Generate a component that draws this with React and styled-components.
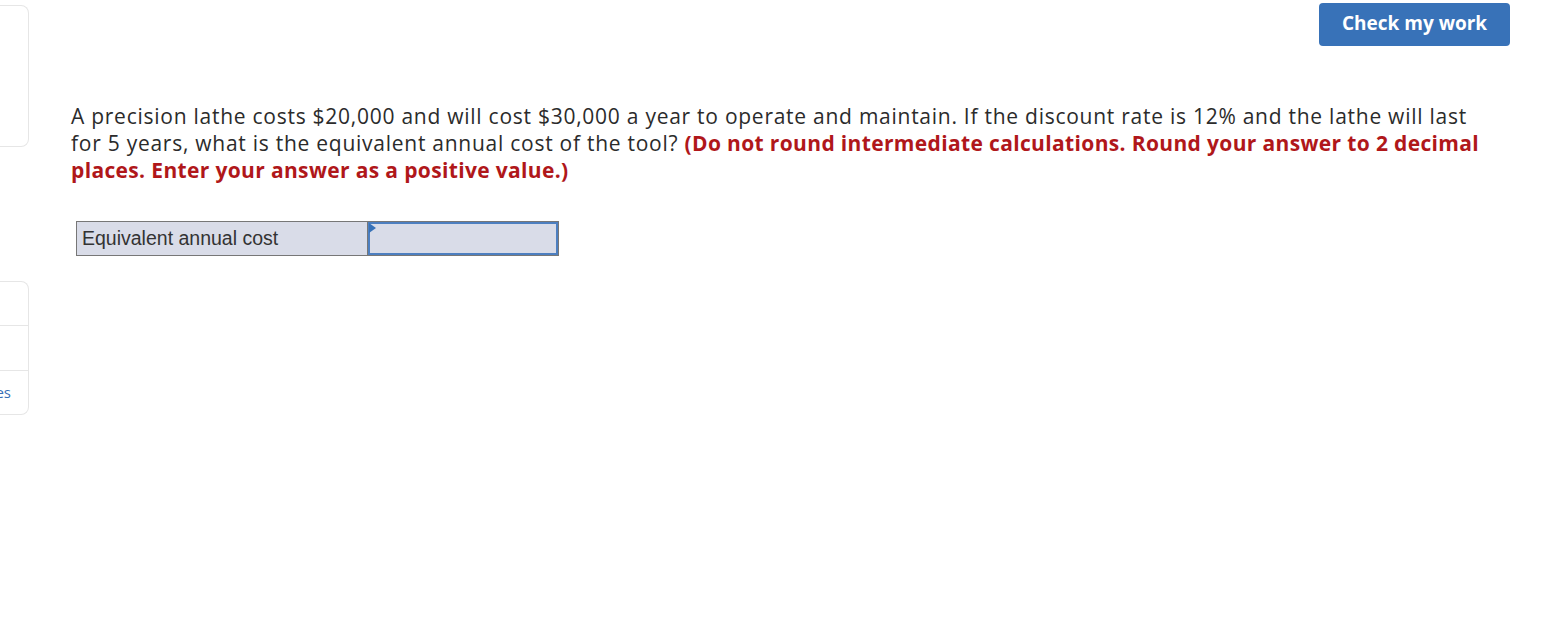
import React from "react";
import styled, { createGlobalStyle } from "styled-components";

const GlobalStyle = createGlobalStyle`
    body {
        margin: 0;
        background: #fff;
        font-family: "Open Sans", "Lato", sans-serif;
    }
`;

const Page = styled.div`
    display: flex;
    flex-direction: row;
    min-height: 633px;
`;

const Sidebar = styled.div`
    width: 29px;
    flex-shrink: 0;
    display: flex;
    flex-direction: column;
    padding-top: 5px;
`;

const Card = styled.div`
    height: ${props => props.height}px;
    margin-top: ${props => props.top || 0}px;
    border: 1px solid #e6e6e6;
    border-left: none;
    border-radius: 0 8px 8px 0;
    display: flex;
    flex-direction: column;
    overflow: hidden;
`;

const CardRow = styled.div`
    flex: 1;
    display: flex;
    align-items: center;
    justify-content: flex-end;
    padding-right: 17px;
    border-top: ${props => (props.first ? "none" : "1px solid #e6e6e6")};
    color: #3a6fb5;
    font-family: "Open Sans", sans-serif;
    font-size: 15px;
    white-space: nowrap;
`;

const Main = styled.div`
    flex: 1;
    display: flex;
    flex-direction: column;
    padding: 3px 57px 0 42px;
`;

const Toolbar = styled.div`
    display: flex;
    justify-content: flex-end;
`;

const CheckButton = styled.button`
    width: 191px;
    height: 43px;
    padding: 0 0 4px 0;
    background: #3872b8;
    color: #fff;
    border: none;
    border-radius: 4px;
    font-family: "Open Sans", sans-serif;
    font-weight: 700;
    font-size: 19px;
    cursor: pointer;
`;

const Question = styled.p`
    margin: 57px 0 0 0;
    max-width: 1410px;
    font-size: 21px;
    line-height: 27px;
    letter-spacing: 0.74px;
    color: #2b2b2b;
`;

const Note = styled.strong`
    color: #b0171a;
    font-weight: 700;
    font-size: 21px;
    letter-spacing: 0.35px;
`;

const AnswerTable = styled.table`
    align-self: flex-start;
    margin: 37px 0 0 5px;
    border-collapse: collapse;
    font-family: "Liberation Sans", Arial, sans-serif;
`;

const LabelCell = styled.td`
    width: 280px;
    height: 33px;
    padding: 0 5px;
    background: #d9dce8;
    border: 1px solid #777;
    color: #333;
    font-size: 19.5px;
`;

const InputCell = styled.td`
    width: 190px;
    padding: 0;
    border: 1px solid #777;
    background: #d9dce8;
    position: relative;
`;

const AnswerInput = styled.input`
    display: block;
    box-sizing: border-box;
    width: 190px;
    height: 33px;
    margin: 0;
    border: 2px solid #4d7fc0;
    background: #d9dce8;
    outline: none;
`;

const Flag = styled.span`
    position: absolute;
    top: 1px;
    left: 1px;
    width: 0;
    height: 0;
    border-top: 5px solid transparent;
    border-bottom: 5px solid transparent;
    border-left: 7px solid #3872b8;
`;

export default function App() {
    return (
        <Page>
            <GlobalStyle />
            <Sidebar>
                <Card height={140} />
                <Card height={132} top={134}>
                    <CardRow first />
                    <CardRow />
                    <CardRow>Resources</CardRow>
                </Card>
            </Sidebar>
            <Main>
                <Toolbar>
                    <CheckButton>Check my work</CheckButton>
                </Toolbar>
                <Question>
                    A precision lathe costs $20,000 and will cost $30,000 a year to operate and
                    maintain. If the discount rate is 12% and the lathe will last for 5 years,
                    what is the equivalent annual cost of the tool?{" "}
                    <Note>
                        (Do not round intermediate calculations. Round your answer to 2 decimal
                        places. Enter your answer as a positive value.)
                    </Note>
                </Question>
                <AnswerTable>
                    <tbody>
                        <tr>
                            <LabelCell>Equivalent annual cost</LabelCell>
                            <InputCell>
                                <AnswerInput type="text" />
                                <Flag />
                            </InputCell>
                        </tr>
                    </tbody>
                </AnswerTable>
            </Main>
        </Page>
    );
}
